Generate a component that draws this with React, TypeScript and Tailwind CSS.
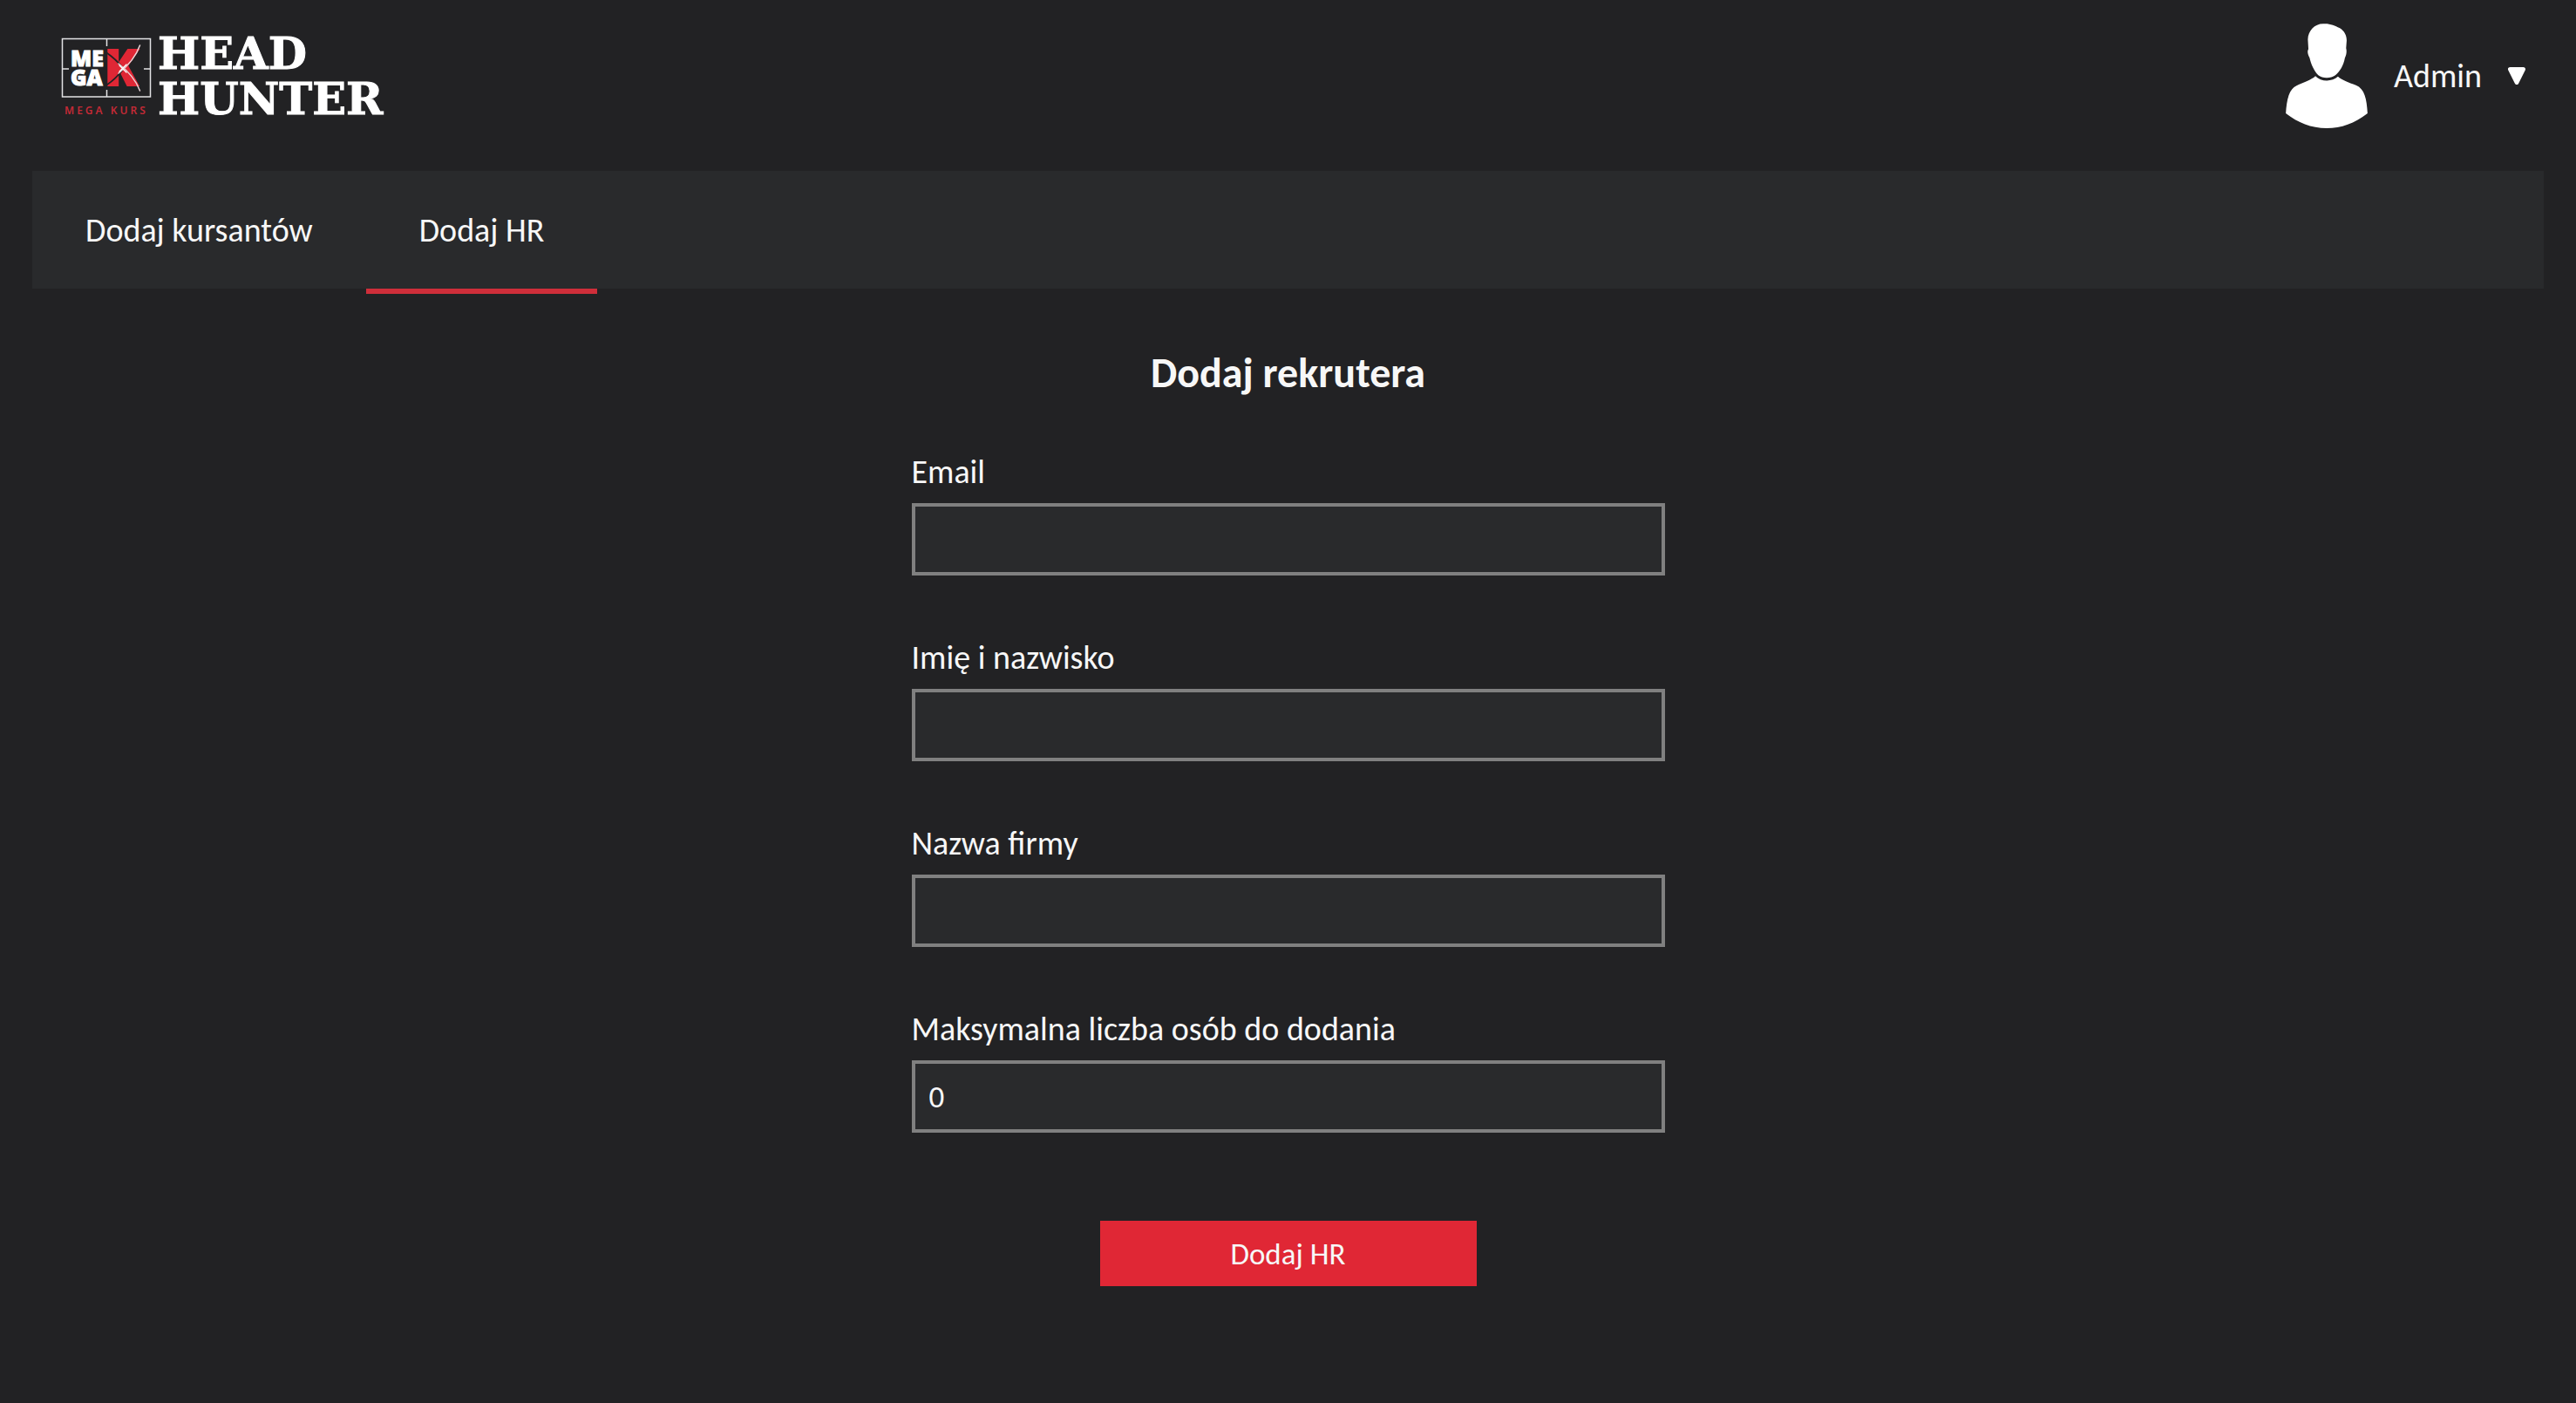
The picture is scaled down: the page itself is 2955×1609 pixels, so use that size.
import { useState } from "react";

function Logo() {
  return (
    <svg
      role="img"
      aria-label="MegaK Head Hunter"
      viewBox="70 42 374 90"
      className="h-[90px] w-[374px] shrink-0 overflow-visible"
    >
      <g fill="none" stroke="#e4e4e5" strokeWidth="1.5">
        <rect x="71.5" y="44.5" width="101" height="66.5" />
        <path d="M122.500 45v8M122.500 103v8M72 79h7M165 79h7" />
      </g>
      <g fill="#fff" stroke="#fff" strokeWidth="1" fontFamily="'Noto Sans', sans-serif" fontWeight="900">
        <text x="81" y="76" fontSize="25">ME</text>
        <text x="81" y="98" fontSize="25">GA</text>
      </g>
      <text x="120" y="98" fill="#e02735" stroke="#e02735" strokeWidth="2" fontSize="56" fontFamily="'Noto Sans', sans-serif" fontWeight="900">K</text>
      <g fill="none" strokeLinecap="round">
        <path d="M123 61Q133 68 140 77M123 97Q132 91 140 81" stroke="#222224" strokeWidth="1.800" />
        <path d="M136 84Q154 70 160.500 52M136 73Q154 87 160.500 104" stroke="#e9d5d7" strokeWidth="1.500" />
        <path d="M137 75l8 8M137 82l8-8" stroke="#fff" strokeWidth="1.300" />
      </g>
      <text x="74" y="131" fill="#c22a36" fontSize="12" letterSpacing="3" fontFamily="'Noto Sans', sans-serif" fontWeight="600">MEGA KURS</text>
      <g fill="#fff" stroke="#fff" strokeWidth="1" fontFamily="'DejaVu Serif', serif" fontWeight="700" fontSize="51">
        <text x="181" y="79">HEAD</text>
        <text x="181" y="131">HUNTER</text>
      </g>
    </svg>
  );
}

function Avatar() {
  return (
    <svg aria-hidden="true" viewBox="93 50 282 361" className="h-[120px] w-[94px]" fill="#fff">
      <path d="M222 51C245 49 262 58 278 65C296 75 303 92 303 108L301 135C304 145 302 158 297 168C292 195 280 215 264 228C248 240 220 240 205 228C190 213 180 190 175 168C169 158 166 145 171 138L169 105C170 75 192 51 222 51Z" />
      <path d="M195 231C215 252 252 252 273 233C285 245 310 254 335 263C365 275 372 310 375 360C330 395 285 411 234 411C180 411 135 392 93 360C96 310 105 275 130 264C155 252 180 245 195 231Z" />
    </svg>
  );
}

const tabs = [
  { label: "Dodaj kursantów", href: "#kursanci", active: false },
  { label: "Dodaj HR", href: "#hr", active: true },
];

const fields = [
  { id: "email", label: "Email", type: "email" },
  { id: "fullName", label: "Imię i nazwisko", type: "text" },
  { id: "company", label: "Nazwa firmy", type: "text" },
  { id: "maxStudents", label: "Maksymalna liczba osób do dodania", type: "text" },
];

export default function App() {
  const [values, setValues] = useState<Record<string, string>>({
    email: "",
    fullName: "",
    company: "",
    maxStudents: "0",
  });

  return (
    <div className="min-h-screen bg-[#222224] px-[37px] font-[Calibri,Carlito,Lato,sans-serif] text-[38px] leading-[48px] text-[#f7f7f7]">
      <header className="flex items-center justify-between pt-[27px] pr-[21px] pb-[49px] pl-[33px]">
        <Logo />
        <button type="button" className="flex items-center gap-[30px]">
          <Avatar />
          <span>Admin</span>
          <svg aria-hidden="true" viewBox="0 0 20 20" className="size-5">
            <path d="M2.500 2.500h15L10 17.500z" fill="#fff" stroke="#fff" strokeWidth="5" strokeLinejoin="round" />
          </svg>
        </button>
      </header>

      <nav className="flex bg-[#292a2c]">
        {tabs.map((tab) => (
          <a
            key={tab.label}
            href={tab.href}
            aria-current={tab.active ? "page" : undefined}
            className={
              tab.active
                ? "relative flex h-[135px] items-center px-[61px] after:absolute after:inset-x-0 after:top-full after:h-1.5 after:bg-[#cf2e3a]"
                : "flex h-[135px] items-center px-[61px]"
            }
          >
            {tab.label}
          </a>
        ))}
      </nav>

      <main className="pt-[68px] pb-16">
        <h1 className="text-center text-[48px] leading-[58px] font-bold">Dodaj rekrutera</h1>
        <form
          className="mx-auto mt-[60px] flex w-full max-w-[864px] flex-col gap-[70px]"
          onSubmit={(e) => e.preventDefault()}
        >
          {fields.map((f) => (
            <div key={f.id} className="flex flex-col gap-3">
              <label htmlFor={f.id}>{f.label}</label>
              <input
                id={f.id}
                type={f.type}
                value={values[f.id]}
                onChange={(e) => setValues({ ...values, [f.id]: e.target.value })}
                className="h-[83px] w-full border-4 border-[#808080] bg-[#292a2c] px-4 text-[35px] outline-none"
              />
            </div>
          ))}
          <button type="submit" className="mt-[31px] h-[75px] w-1/2 self-center bg-[#e02735] text-[35px]">
            Dodaj HR
          </button>
        </form>
      </main>
    </div>
  );
}
